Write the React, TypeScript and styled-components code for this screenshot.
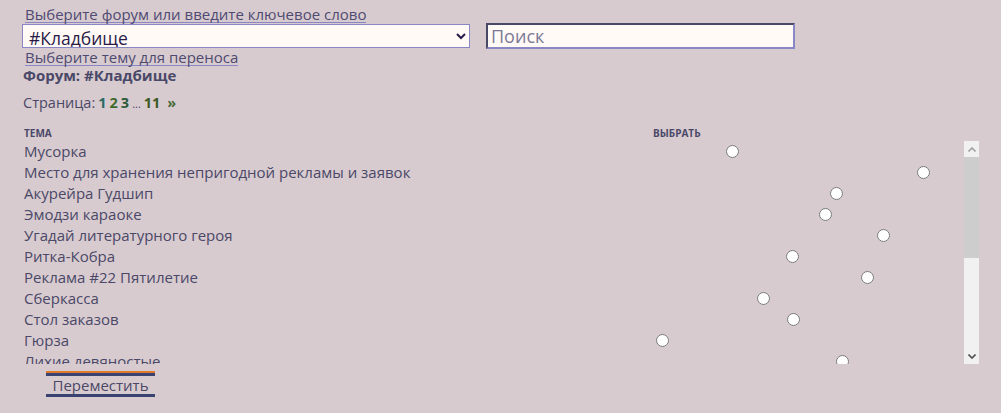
import { createGlobalStyle, styled } from "styled-components"

const GlobalStyle = createGlobalStyle`
  body {
    margin: 0;
    background: #d8cbcf;
    font-family: "Open Sans", "Liberation Sans", sans-serif;
    color: #4a4868;
  }
`

type Topic = { title: string; offset: number }

const topics: Topic[] = [
  { title: "Мусорка", offset: 73 },
  { title: "Место для хранения непригодной рекламы и заявок", offset: 264 },
  { title: "Акурейра Гудшип", offset: 177 },
  { title: "Эмодзи караоке", offset: 166 },
  { title: "Угадай литературного героя", offset: 224 },
  { title: "Ритка-Кобра", offset: 133 },
  { title: "Реклама #22 Пятилетие", offset: 208 },
  { title: "Сберкасса", offset: 104 },
  { title: "Стол заказов", offset: 134 },
  { title: "Гюрза", offset: 3 },
  { title: "Лихие девяностые", offset: 183 },
]

const S = {
  Page: styled.div`
    padding: 6px 22px 0 22px;
  `,
  Label: styled.div`
    display: block;
    width: fit-content;
    margin-left: 3px;
    font-size: 15px;
    line-height: 16px;
    color: #4e4a72;
    border-bottom: 1px solid #8a88c4;
  `,
  Controls: styled.div`
    display: flex;
    align-items: center;
    gap: 16px;
    height: 26px;
  `,
  Select: styled.select`
    width: 448px;
    height: 24px;
    box-sizing: border-box;
    background: #fffaf5;
    border: 1px solid #8a88c4;
    border-radius: 0;
    font-family: "Open Sans", "Liberation Sans", sans-serif;
    font-size: 17.5px;
    color: #2a1a48;
    padding: 0 2px;
  `,
  Search: styled.input`
    width: 309px;
    height: 26px;
    box-sizing: border-box;
    background: #fffaf5;
    border: 2px solid #8a88c4;
    border-top-color: #4a4868;
    border-left-color: #4a4868;
    font-family: "Open Sans", "Liberation Sans", sans-serif;
    font-size: 18px;
    padding: 0 3px;
    outline: none;
    &::placeholder {
      color: #7c7a98;
    }
  `,
  Forum: styled.div`
    margin-top: 1px;
    margin-left: 1px;
    font-size: 15px;
    font-weight: 700;
    color: #4a4868;
    line-height: 17px;
  `,
  Pager: styled.div`
    margin-top: 11px;
    margin-left: 1px;
    height: 16px;
    font-size: 14.5px;
    line-height: 16px;
    display: flex;
    align-items: baseline;
    gap: 3px;
  `,
  PageLink: styled.span<{ $tone: string }>`
    font-weight: 700;
    color: ${({ $tone }) => $tone};
  `,
  Dots: styled.span`
    font-size: 11px;
    color: #4a4868;
  `,
  Head: styled.div`
    display: grid;
    grid-template-columns: 629px 1fr;
    margin-top: 16px;
    margin-left: 2px;
    height: 12px;
    font-size: 10px;
    font-weight: 700;
    text-transform: uppercase;
    color: #4a4868;
    line-height: 12px;
  `,
  ListFrame: styled.div`
    display: flex;
    width: 957px;
    height: 223px;
    margin-top: 2px;
  `,
  List: styled.div`
    flex: 1;
    overflow: hidden;
  `,
  Row: styled.div`
    display: grid;
    grid-template-columns: 631px 1fr;
    align-items: center;
    height: 21px;
    font-size: 15px;
    color: #4a4868;
    white-space: nowrap;
  `,
  Title: styled.span`
    padding: 0 0 2px 2px;
  `,
  Radio: styled.input`
    margin: 0;
    width: 13px;
    height: 13px;
  `,
  ScrollBar: styled.div`
    width: 15px;
    display: flex;
    flex-direction: column;
    background: #f1f1f1;
  `,
  ScrollButton: styled.div<{ $dark?: boolean }>`
    height: 16px;
    display: flex;
    align-items: center;
    justify-content: center;
    color: ${({ $dark }) => ($dark ? "#505050" : "#a3a3a3")};
  `,
  Thumb: styled.div`
    height: 101px;
    background: #cdcdcd;
  `,
  Track: styled.div`
    flex: 1;
  `,
  Move: styled.button`
    display: block;
    margin: 7px 0 0 24px;
    width: 109px;
    padding: 4px 0 1px;
    background: none;
    border: none;
    border-top: 2px solid #e07a2c;
    box-shadow: inset 0 3px 0 #3a4272;
    border-bottom: 3px solid #3a4272;
    font-family: "Open Sans", "Liberation Sans", sans-serif;
    font-size: 15px;
    color: #4a4868;
    line-height: 16px;
    cursor: pointer;
  `,
}

const Arrow = ({ down }: { down?: boolean }) => (
  <svg width="8" height="5" viewBox="0 0 8 5">
    <path
      d={down ? "M0.5 0.5 L4 4 L7.5 0.5" : "M0.5 4.5 L4 1 L7.5 4.5"}
      fill="none"
      stroke="currentColor"
      strokeWidth="1.6"
    />
  </svg>
)

export default function App() {
  return (
    <>
      <GlobalStyle />
      <S.Page>
        <S.Label>Выберите форум или введите ключевое слово</S.Label>
        <S.Controls>
          <S.Select defaultValue="cemetery">
            <option value="cemetery">#Кладбище</option>
          </S.Select>
          <S.Search placeholder="Поиск" />
        </S.Controls>
        <S.Label>Выберите тему для переноса</S.Label>
        <S.Forum>Форум: #Кладбище</S.Forum>
        <S.Pager>
          <span>Страница:</span>
          <S.PageLink $tone="#2c6a66">1</S.PageLink>
          <S.PageLink $tone="#3f6a2c">2</S.PageLink>
          <S.PageLink $tone="#2d5a3a">3</S.PageLink>
          <S.Dots>...</S.Dots>
          <S.PageLink $tone="#3c5a24">11</S.PageLink>
          <S.PageLink $tone="#4a6a3a">&nbsp;»</S.PageLink>
        </S.Pager>
        <S.Head>
          <span>Тема</span>
          <span>Выбрать</span>
        </S.Head>
        <S.ListFrame>
          <S.List>
            {topics.map((t) => (
              <S.Row key={t.title}>
                <S.Title>{t.title}</S.Title>
                <div>
                  <S.Radio type="radio" name="topic" style={{ marginLeft: t.offset }} />
                </div>
              </S.Row>
            ))}
          </S.List>
          <S.ScrollBar>
            <S.ScrollButton>
              <Arrow />
            </S.ScrollButton>
            <S.Thumb />
            <S.Track />
            <S.ScrollButton $dark>
              <Arrow down />
            </S.ScrollButton>
          </S.ScrollBar>
        </S.ListFrame>
        <S.Move>Переместить</S.Move>
      </S.Page>
    </>
  )
}
